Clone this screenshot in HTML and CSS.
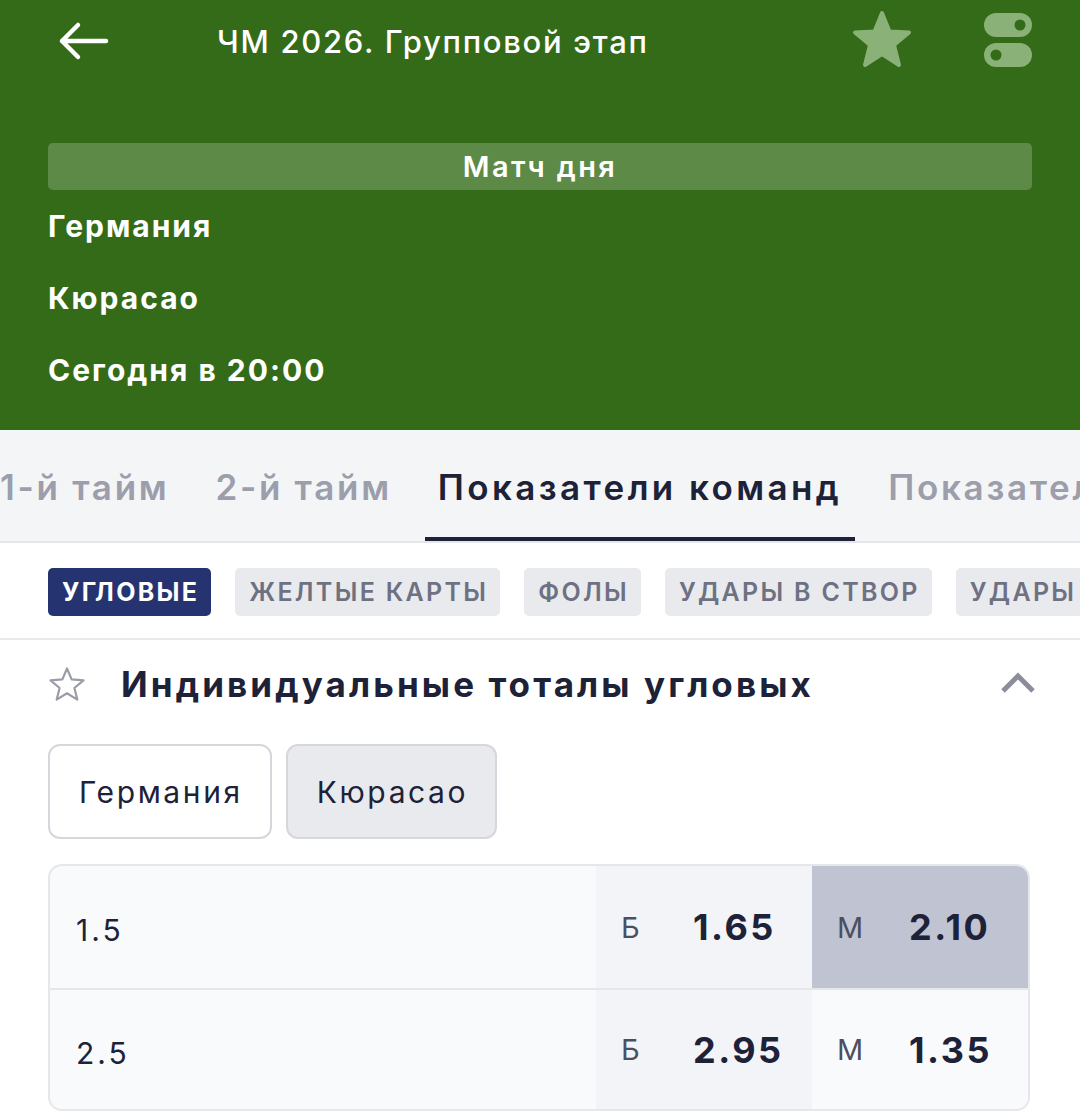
FILE: index.html
```html
<!DOCTYPE html>
<html lang="ru">
<head>
<meta charset="utf-8">
<link rel="stylesheet" href="styles.css">
</head>
<body>
<div class="page">
  <header class="header">
    <div class="topbar">
      <svg class="back" width="52" height="40" viewBox="0 0 52 40">
        <path d="M4 20 H48 M20 4 L4 20 L20 36" fill="none" stroke="#ffffff" stroke-width="4.5" stroke-linecap="round" stroke-linejoin="round"/>
      </svg>
      <div class="title">ЧМ 2026. Групповой этап</div>
      <svg class="star" width="62" height="60" viewBox="0 0 62 60">
        <path d="M31 3 L38.5 21.5 L58 22.5 L43 35 L48 55 L31 44 L14 55 L19 35 L4 22.5 L23.5 21.5 Z" fill="#8ab178" stroke="#8ab178" stroke-width="4" stroke-linejoin="round"/>
      </svg>
      <svg class="toggles" width="48" height="56" viewBox="0 0 48 56">
        <rect x="0" y="0" width="48" height="24" rx="12" fill="#8ab178"/>
        <circle cx="36" cy="12" r="5.5" fill="#336b18"/>
        <rect x="0" y="30" width="48" height="24" rx="12" fill="#8ab178"/>
        <circle cx="12" cy="42" r="5.5" fill="#336b18"/>
      </svg>
    </div>
    <div class="banner">Матч дня</div>
    <div class="line">Германия</div>
    <div class="line">Кюрасао</div>
    <div class="line">Сегодня в 20:00</div>
  </header>

  <nav class="tabs">
    <div class="tab">1-й тайм</div>
    <div class="tab">2-й тайм</div>
    <div class="tab active">Показатели команд</div>
    <div class="tab">Показатели игроков</div>
  </nav>

  <div class="chips">
    <div class="chip active">Угловые</div>
    <div class="chip">Желтые карты</div>
    <div class="chip">Фолы</div>
    <div class="chip">Удары в створ</div>
    <div class="chip">Удары</div>
  </div>

  <section class="market">
    <div class="market-head">
      <svg class="mstar" width="38" height="36" viewBox="0 0 38 36">
        <path d="M19 2.5 L23.6 13.4 L35.5 14.3 L26.4 22 L29.3 33.6 L19 27.3 L8.7 33.6 L11.6 22 L2.5 14.3 L14.4 13.4 Z" fill="none" stroke="#9a9ca8" stroke-width="2.2" stroke-linejoin="round"/>
      </svg>
      <h2 class="market-title">Индивидуальные тоталы угловых</h2>
      <svg class="chev" width="36" height="24" viewBox="0 0 36 24">
        <path d="M3 20 L18 5 L33 20" fill="none" stroke="#8a8d9b" stroke-width="5"/>
      </svg>
    </div>

    <div class="teams">
      <div class="team">Германия</div>
      <div class="team selected">Кюрасао</div>
    </div>

    <div class="odds">
      <div class="row">
        <div class="total">1.5</div>
        <div class="cell over"><span class="lbl">Б</span><span class="val">1.65</span></div>
        <div class="cell under picked"><span class="lbl">М</span><span class="val">2.10</span></div>
      </div>
      <div class="row">
        <div class="total">2.5</div>
        <div class="cell over"><span class="lbl">Б</span><span class="val">2.95</span></div>
        <div class="cell under"><span class="lbl">М</span><span class="val">1.35</span></div>
      </div>
    </div>
  </section>
</div>
</body>
</html>
```

FILE: styles.css
```css
* { box-sizing: border-box; }
html, body { margin: 0; padding: 0; }
body {
  width: 1080px;
  height: 1120px;
  overflow: hidden;
  background: #ffffff;
  font-family: "Inter", "Noto Sans", sans-serif;
  color: #1d2238;
}
.page { width: 1080px; }

.header {
  background: #336b18;
  height: 430px;
  padding: 0 48px;
  color: #ffffff;
}
.topbar {
  height: 82px;
  display: flex;
  align-items: center;
}
.back { margin-left: 10px; flex: none; }
.title {
  margin-left: 107px;
  font-size: 31px;
  font-weight: 500;
  letter-spacing: 1.7px;
  flex: 1;
}
.star { flex: none; margin-right: 71px; margin-top: -3px; }
.toggles { flex: none; }

.banner {
  margin-top: 61px;
  height: 47px;
  border-radius: 5px;
  background: #5e8a48;
  display: flex;
  align-items: center;
  justify-content: center;
  font-size: 29px;
  font-weight: 600;
  letter-spacing: 2.4px;
}
.line {
  height: 72px;
  display: flex;
  align-items: center;
  font-size: 30px;
  font-weight: 700;
  letter-spacing: 2px;
}
.line:first-of-type { margin-top: 1px; }

.tabs {
  height: 113px;
  background: #f4f5f7;
  border-bottom: 2px solid #e4e5e9;
  display: flex;
  gap: 20px;
  overflow: hidden;
  white-space: nowrap;
}
.tab {
  padding: 6px 13px 0;
  display: flex;
  align-items: center;
  font-size: 35px;
  font-weight: 600;
  letter-spacing: 2.7px;
  color: #9c9eac;
  border-bottom: 4px solid transparent;
  flex: none;
}
.tab:first-child { margin-left: -13px; }
.tab.active { color: #1d2238; border-bottom-color: #1d2238; letter-spacing: 3.4px; }

.chips {
  height: 97px;
  display: flex;
  align-items: center;
  gap: 24px;
  padding: 2px 0 0 48px;
  border-bottom: 2px solid #e8e9ec;
  overflow: hidden;
  white-space: nowrap;
}
.chip {
  flex: none;
  height: 48px;
  padding: 0 12px 0 14px;
  border-radius: 5px;
  background: #e9eaee;
  color: #6e7182;
  font-size: 25px;
  font-weight: 600;
  letter-spacing: 2.3px;
  text-transform: uppercase;
  display: flex;
  align-items: center;
}
.chip.active { background: #253470; color: #ffffff; font-weight: 700; }

.market { padding: 0 48px; }
.market-head {
  height: 88px;
  display: flex;
  align-items: center;
}
.mstar { flex: none; margin-right: 35px; }
.market-title {
  margin: 0;
  flex: 1;
  font-size: 35px;
  font-weight: 700;
  letter-spacing: 3.1px;
  color: #1d2238;
}
.chev { flex: none; margin-right: -4px; margin-top: -2px; }

.teams {
  display: flex;
  gap: 14px;
  margin-top: 16px;
}
.team {
  height: 95px;
  padding: 0 27px 0 29px;
  border: 2px solid #d6d7dc;
  border-radius: 12px;
  background: #ffffff;
  font-size: 30px;
  font-weight: 400;
  letter-spacing: 2.6px;
  display: flex;
  align-items: center;
  color: #1d2238;
}
.team.selected { background: #e9eaee; }

.odds {
  margin-top: 25px;
  width: 982px;
  border: 2px solid #e6e7eb;
  border-radius: 14px;
  overflow: hidden;
  background: #f9fafb;
}
.row {
  height: 122px;
  display: flex;
}
.row + .row { border-top: 2px solid #e6e7eb; height: 121px; }
.total {
  flex: 1;
  display: flex;
  align-items: center;
  padding-left: 26px;
  padding-top: 6px;
  font-size: 30px;
  font-weight: 400;
  letter-spacing: 3px;
}
.cell {
  width: 216px;
  display: flex;
  align-items: center;
  padding-left: 25px;
}
.cell.over { background: #f2f4f8; }
.cell.under { background: #f9fafb; }
.cell.picked { background: #c0c3d1; }
.lbl {
  width: 72px;
  font-size: 29px;
  color: #4c4f60;
  font-weight: 400;
}
.val {
  font-size: 36px;
  font-weight: 700;
  letter-spacing: 2.5px;
  color: #1d2238;
}
```
